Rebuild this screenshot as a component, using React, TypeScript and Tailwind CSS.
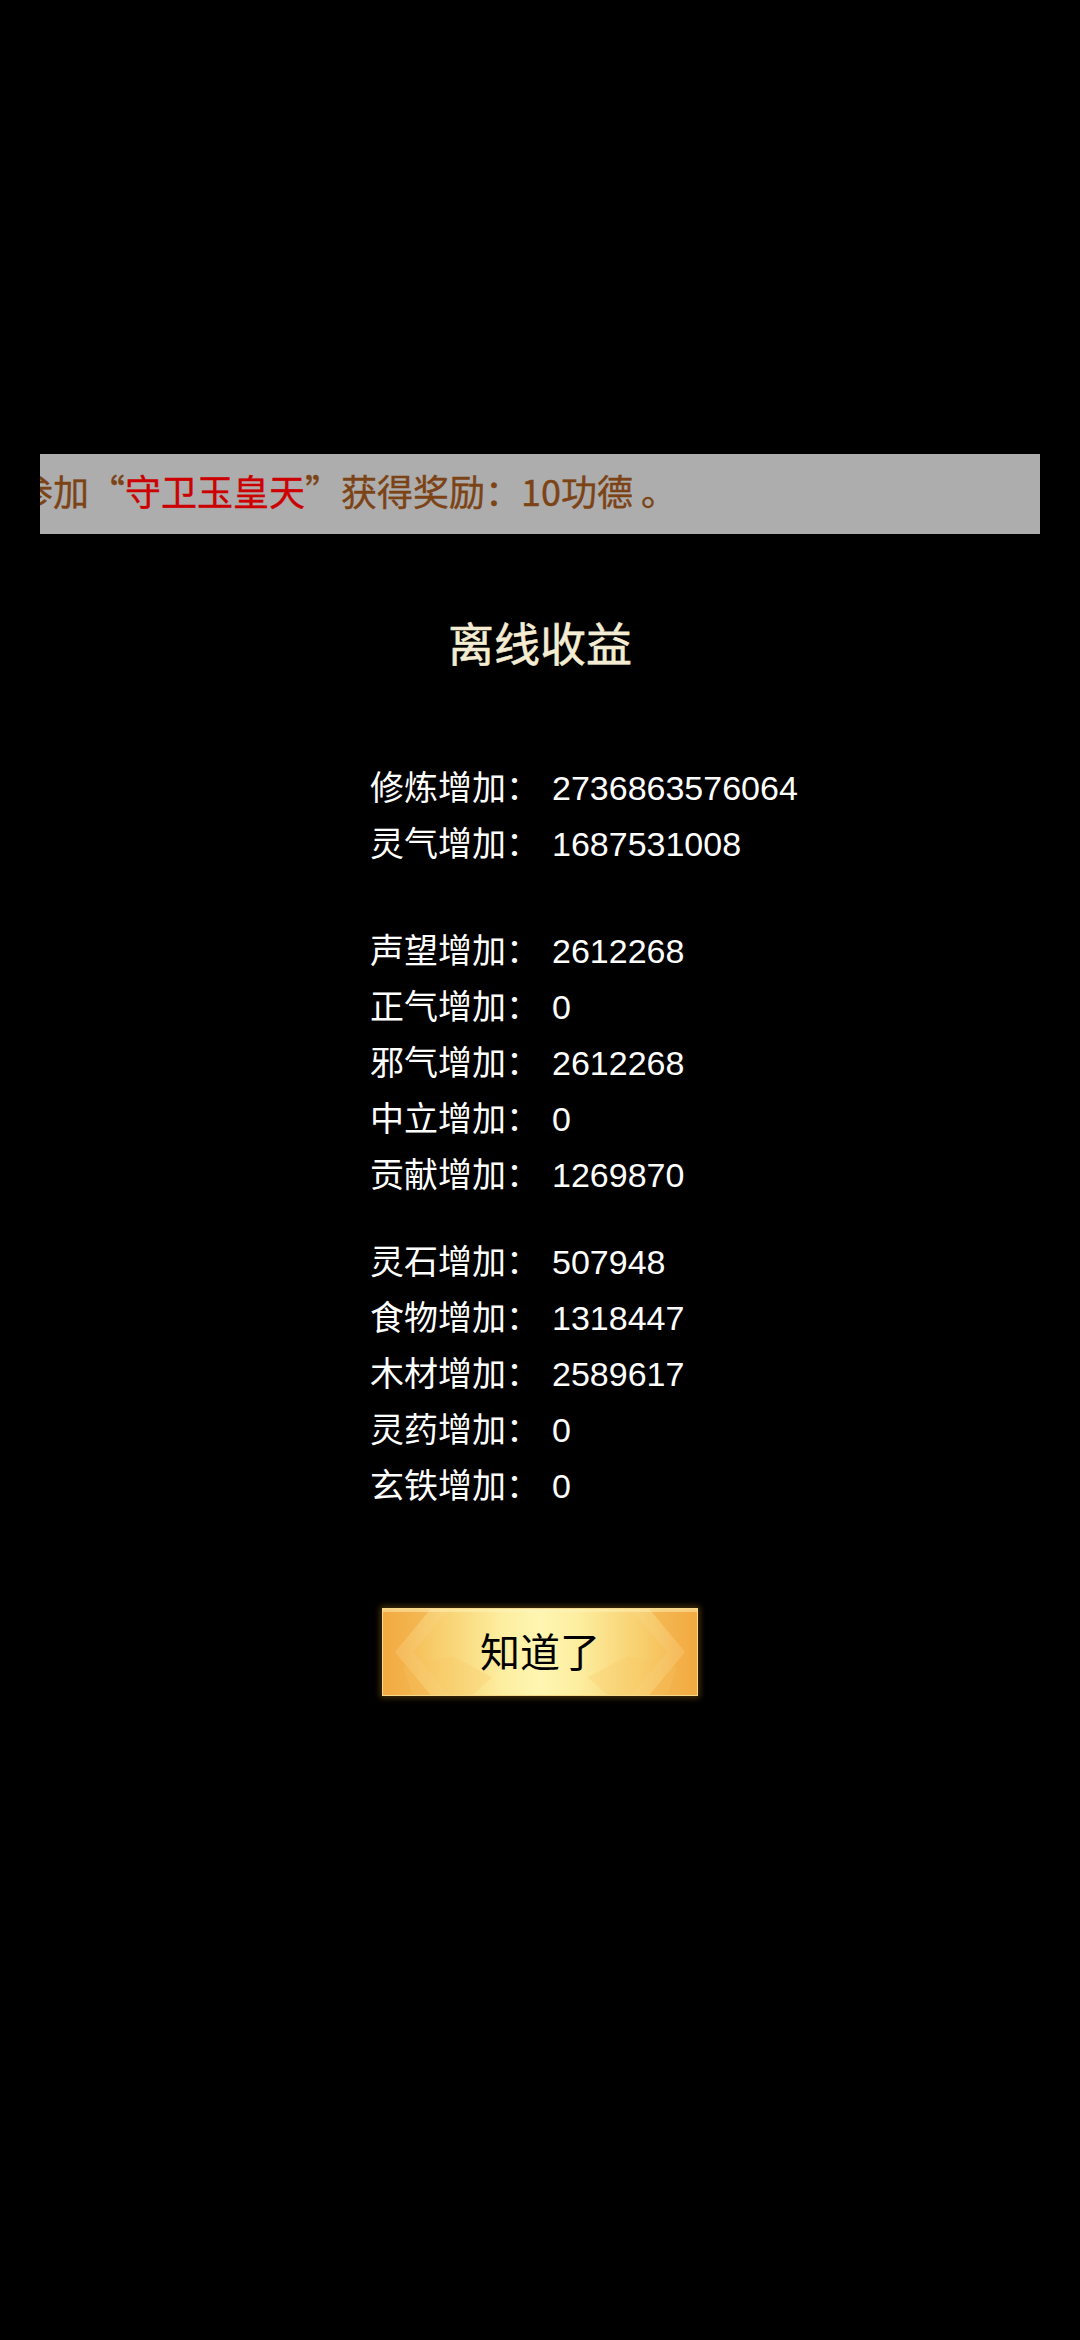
import React from "react";

const groups: [string, string][][] = [
  [
    ["修炼增加：", "2736863576064"],
    ["灵气增加：", "1687531008"],
  ],
  [
    ["声望增加：", "2612268"],
    ["正气增加：", "0"],
    ["邪气增加：", "2612268"],
    ["中立增加：", "0"],
    ["贡献增加：", "1269870"],
  ],
  [
    ["灵石增加：", "507948"],
    ["食物增加：", "1318447"],
    ["木材增加：", "2589617"],
    ["灵药增加：", "0"],
    ["玄铁增加：", "0"],
  ],
];

function Row({ label, value }: { label: string; value: string }) {
  return (
    <div className="flex h-[56px] items-center">
      <span className="w-[182px] shrink-0">{label}</span>
      <span>{value}</span>
    </div>
  );
}

export default function App() {
  return (
    <div className="min-h-[2340px] w-[1080px] bg-black pt-[454px] [font-family:'Noto_Sans_CJK_SC',sans-serif]">
      {/* marquee banner */}
      <div className="mx-[40px] h-[80px] overflow-hidden bg-[#adadad]">
        <div className="ml-[-23px] flex h-full items-center whitespace-nowrap pb-[8px] text-[36px] font-normal text-[#7b4316] [-webkit-text-stroke:0.4px_#7b4316]">
          <span>参加“</span>
          <span className="text-[#cc0000] [-webkit-text-stroke:0.4px_#cc0000]">守卫玉皇天</span>
          <span>”获得奖励：10功德 。</span>
        </div>
      </div>

      {/* title */}
      <div className="mt-[77px] flex h-[60px] items-center justify-center text-[46px] font-normal text-[#f4edd3] [-webkit-text-stroke:0.6px_#f4edd3]">
        离线收益
      </div>

      {/* rows */}
      <div className="mt-[89px] flex flex-col pl-[370px] text-[34px] text-white [font-family:'Liberation_Sans','Noto_Sans_CJK_SC',sans-serif]">
        <div className="flex flex-col">
          {groups[0].map(([l, v]) => (
            <Row key={l} label={l} value={v} />
          ))}
        </div>
        <div className="mt-[51px] flex flex-col">
          {groups[1].map(([l, v]) => (
            <Row key={l} label={l} value={v} />
          ))}
        </div>
        <div className="mt-[31px] flex flex-col">
          {groups[2].map(([l, v]) => (
            <Row key={l} label={l} value={v} />
          ))}
        </div>
      </div>

      {/* button */}
      <div className="mt-[94px] flex justify-center">
        <div className="relative h-[88px] w-[316px] overflow-hidden border border-[#f7d98a] bg-[linear-gradient(90deg,#f4ad45_0%,#f8cf6e_18%,#fdeea0_38%,#fff6b2_50%,#fdeea0_62%,#f8cf6e_82%,#f4ad45_100%)] shadow-[0_0_6px_2px_rgba(120,80,20,0.6)]">
          <svg
            className="absolute inset-0 h-full w-full"
            viewBox="0 0 316 88"
            preserveAspectRatio="none"
          >
            <polygon points="0,0 48,0 12,44 48,88 0,88" fill="#f1a53c" opacity="0.4" />
            <polygon points="48,0 66,0 30,44 66,88 48,88 12,44" fill="#ffffff" opacity="0.07" />
            <polygon points="316,0 268,0 304,44 268,88 316,88" fill="#f1a53c" opacity="0.4" />
            <polygon points="268,0 250,0 286,44 250,88 268,88 304,44" fill="#ffffff" opacity="0.07" />
            <polygon points="20,60 70,48 110,70 90,88 30,88" fill="#f6c45e" opacity="0.25" />
            <polygon points="296,60 246,48 206,70 226,88 286,88" fill="#f6c45e" opacity="0.25" />
            <rect x="0" y="0" width="316" height="3" fill="#fff3c0" opacity="0.5" />
          </svg>
          <div className="relative flex h-full items-center justify-center pb-[4px] text-[40px] text-black">
            知道了
          </div>
        </div>
      </div>
    </div>
  );
}
